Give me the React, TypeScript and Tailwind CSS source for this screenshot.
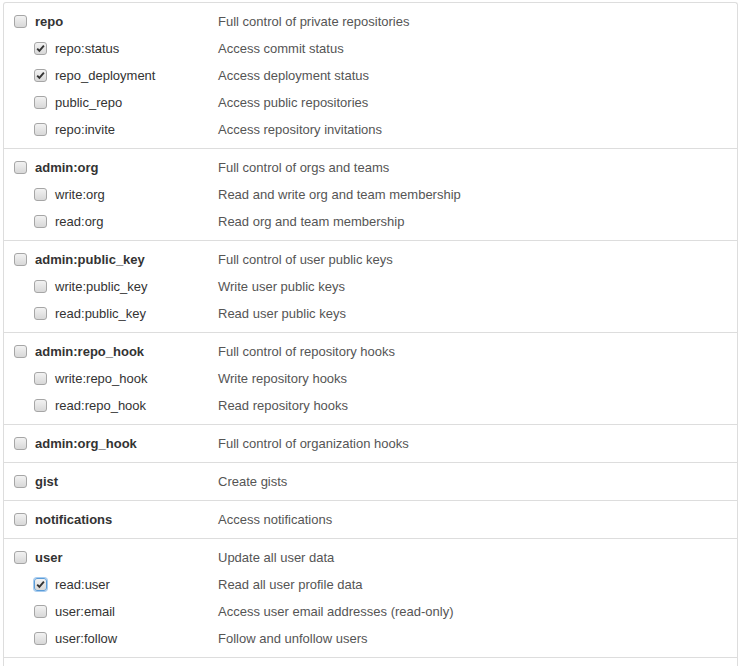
type Scope = { name: string; desc: string; checked?: boolean; focused?: boolean };
type Group = { parent: Scope; children: Scope[] };

const groups: Group[] = [
  {
    parent: { name: 'repo', desc: 'Full control of private repositories' },
    children: [
      { name: 'repo:status', desc: 'Access commit status', checked: true },
      { name: 'repo_deployment', desc: 'Access deployment status', checked: true },
      { name: 'public_repo', desc: 'Access public repositories' },
      { name: 'repo:invite', desc: 'Access repository invitations' },
    ],
  },
  {
    parent: { name: 'admin:org', desc: 'Full control of orgs and teams' },
    children: [
      { name: 'write:org', desc: 'Read and write org and team membership' },
      { name: 'read:org', desc: 'Read org and team membership' },
    ],
  },
  {
    parent: { name: 'admin:public_key', desc: 'Full control of user public keys' },
    children: [
      { name: 'write:public_key', desc: 'Write user public keys' },
      { name: 'read:public_key', desc: 'Read user public keys' },
    ],
  },
  {
    parent: { name: 'admin:repo_hook', desc: 'Full control of repository hooks' },
    children: [
      { name: 'write:repo_hook', desc: 'Write repository hooks' },
      { name: 'read:repo_hook', desc: 'Read repository hooks' },
    ],
  },
  { parent: { name: 'admin:org_hook', desc: 'Full control of organization hooks' }, children: [] },
  { parent: { name: 'gist', desc: 'Create gists' }, children: [] },
  { parent: { name: 'notifications', desc: 'Access notifications' }, children: [] },
  {
    parent: { name: 'user', desc: 'Update all user data' },
    children: [
      { name: 'read:user', desc: 'Read all user profile data', checked: true, focused: true },
      { name: 'user:email', desc: 'Access user email addresses (read-only)' },
      { name: 'user:follow', desc: 'Follow and unfollow users' },
    ],
  },
];

function Checkbox({ checked, focused }: { checked?: boolean; focused?: boolean }) {
  return (
    <span
      className={
        'relative flex h-[13px] w-[13px] shrink-0 items-center justify-center rounded-[3px] border bg-gradient-to-b from-[#f2f2f2] to-[#d8d8d8] ' +
        (focused ? 'border-[#5b9dd9] shadow-[0_0_0_1px_#a8ccef]' : 'border-[#a6a6a6]')
      }
    >
      {checked && (
        <svg width="9" height="9" viewBox="0 0 9 9" className="block">
          <path d="M1.2 4.6 L3.4 6.9 L7.9 1.6" fill="none" stroke="#333" strokeWidth="1.9" />
        </svg>
      )}
    </span>
  );
}

function Row({ scope, child }: { scope: Scope; child?: boolean }) {
  return (
    <div className="flex h-[27px] items-center">
      <label className={'flex w-[204px] items-center gap-[8px] ' + (child ? 'pl-5' : '')}>
        <Checkbox checked={scope.checked} focused={scope.focused} />
        <span className={child ? 'text-[#333]' : 'font-bold text-[#333]'}>{scope.name}</span>
      </label>
      <span className="text-[#555]">{scope.desc}</span>
    </div>
  );
}

export default function App() {
  return (
    <div className="bg-white pl-[3px] pt-[2px] font-['Liberation_Sans',Arial,sans-serif] text-[13px]">
      <div className="w-[735px] rounded-t-[3px] border border-b-0 border-[#dddddd]">
        {groups.map((g) => (
          <div key={g.parent.name} className="border-b border-[#dddddd] py-[5px] pl-[10px]">
            <Row scope={g.parent} />
            {g.children.map((c) => (
              <Row key={c.name} scope={c} child />
            ))}
          </div>
        ))}
        <div className="h-[30px]" />
      </div>
    </div>
  );
}
